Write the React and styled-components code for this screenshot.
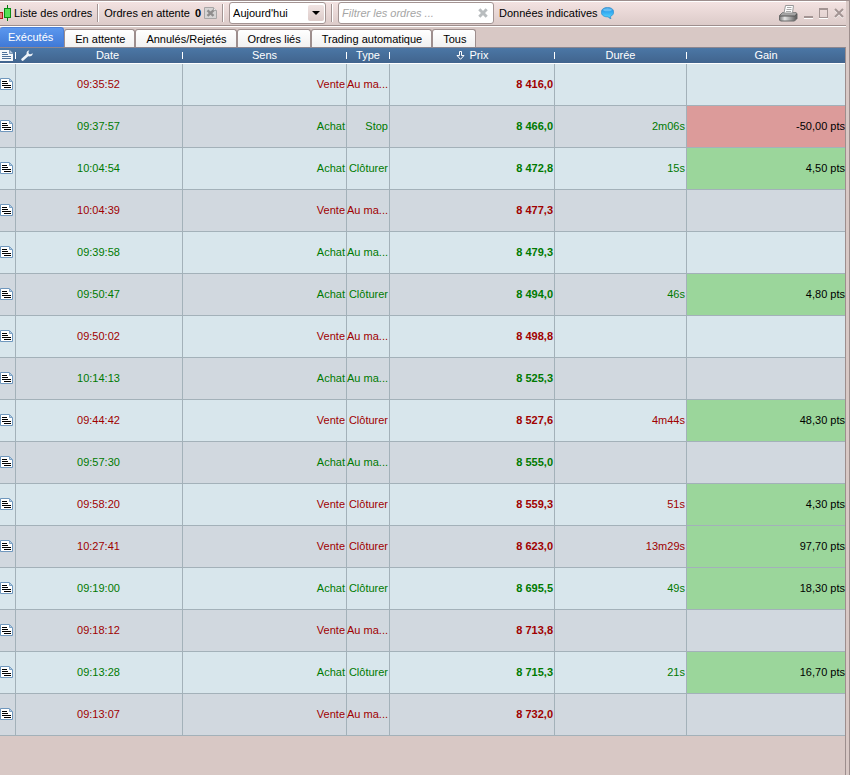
import React, { useState } from "react";
import styled, { createGlobalStyle } from "styled-components";

const TABS = [
  "Exécutés",
  "En attente",
  "Annulés/Rejetés",
  "Ordres liés",
  "Trading automatique",
  "Tous",
];

const ORDERS = [
  { date: "09:35:52", side: "Vente", type: "Au ma...", price: "8 416,0" },
  { date: "09:37:57", side: "Achat", type: "Stop", price: "8 466,0", time: "2m06s", gain: "-50,00 pts" },
  { date: "10:04:54", side: "Achat", type: "Clôturer", price: "8 472,8", time: "15s", gain: "4,50 pts" },
  { date: "10:04:39", side: "Vente", type: "Au ma...", price: "8 477,3" },
  { date: "09:39:58", side: "Achat", type: "Au ma...", price: "8 479,3" },
  { date: "09:50:47", side: "Achat", type: "Clôturer", price: "8 494,0", time: "46s", gain: "4,80 pts" },
  { date: "09:50:02", side: "Vente", type: "Au ma...", price: "8 498,8" },
  { date: "10:14:13", side: "Achat", type: "Au ma...", price: "8 525,3" },
  { date: "09:44:42", side: "Vente", type: "Clôturer", price: "8 527,6", time: "4m44s", gain: "48,30 pts" },
  { date: "09:57:30", side: "Achat", type: "Au ma...", price: "8 555,0" },
  { date: "09:58:20", side: "Vente", type: "Clôturer", price: "8 559,3", time: "51s", gain: "4,30 pts" },
  { date: "10:27:41", side: "Vente", type: "Clôturer", price: "8 623,0", time: "13m29s", gain: "97,70 pts" },
  { date: "09:19:00", side: "Achat", type: "Clôturer", price: "8 695,5", time: "49s", gain: "18,30 pts" },
  { date: "09:18:12", side: "Vente", type: "Au ma...", price: "8 713,8" },
  { date: "09:13:28", side: "Achat", type: "Clôturer", price: "8 715,3", time: "21s", gain: "16,70 pts" },
  { date: "09:13:07", side: "Vente", type: "Au ma...", price: "8 732,0" },
];

const CandleIcon = () => (
  <svg width="12" height="16" viewBox="0 0 12 16" shapeRendering="crispEdges">
    <path d="M0 7.5h2.5v6H0" fill="#e88080" stroke="#b02020" />
    <path d="M7.5 0v16" stroke="#0a7a10" />
    <rect x="4.500" y="3.500" width="6" height="9" fill="#55e055" stroke="#0b8a14" />
  </svg>
);

const CancelAllIcon = () => (
  <svg width="13" height="12" viewBox="0 0 13 12">
    <path d="M.5.5h9l3 3v8H.5z" fill="#d6d4d4" stroke="#a8a6a6" />
    <path d="M9.500.5v3h3" fill="#eee" stroke="#a8a6a6" />
    <path d="M3.500 3.300l6 5.500M9.500 3.300l-6 5.500" stroke="#8f8d8d" strokeWidth="2.400" />
  </svg>
);

const CrossIcon = () => (
  <svg width="10" height="10" viewBox="0 0 10 10">
    <path d="M1.300 1.300l7.400 7.400M8.700 1.300L1.300 8.700" stroke="#b9bdbf" strokeWidth="3" />
  </svg>
);

const BubbleIcon = () => (
  <svg width="13" height="12" viewBox="0 0 13 12">
    <defs>
      <linearGradient id="bubble" x1="0" y1="0" x2="0" y2="1">
        <stop offset="0" stopColor="#2d97dc" />
        <stop offset="0.350" stopColor="#2fa4ee" />
        <stop offset="0.800" stopColor="#4fcbfb" />
        <stop offset="1" stopColor="#1b86cc" />
      </linearGradient>
    </defs>
    <path
      d="M6.500.4C10 .4 12.700 2.200 12.700 4.900c0 2-1.200 3.700-3.200 4.500 0 .9.100 1.600.5 2.300-1.300-.3-2.300-.9-2.900-1.800C3.200 10.100.3 8.200.3 5.200.3 2.400 3 .4 6.500.4z"
      fill="url(#bubble)"
      stroke="#2386c8"
      strokeWidth="0.600"
    />
    <ellipse cx="6.500" cy="2.800" rx="4.300" ry="1.500" fill="#8fd2f8" opacity="0.600" />
  </svg>
);

const PrinterIcon = () => (
  <svg width="19" height="17" viewBox="0 0 19 17">
    <defs>
      <linearGradient id="printer" x1="0" y1="0" x2="1" y2="0">
        <stop offset="0" stopColor="#777" />
        <stop offset="0.300" stopColor="#e6e6e6" />
        <stop offset="1" stopColor="#555" />
      </linearGradient>
    </defs>
    <path d="M3.500 7.500h13l1.500 1v5l-2.500 2.500H1.500L.5 15v-4.500z" fill="url(#printer)" stroke="#6a6a6a" />
    <path d="M3.500 7.500h12.500l2 1.500-2.500 2H1z" fill="#a5a5a5" />
    <path d="M1 11h14.500l2.500-2" fill="none" stroke="#555" />
    <path d="M6.500.5h8l-1 7.500H5z" fill="#fff" stroke="#999" />
    <path d="M8 2.500h4.500M7.500 4.500h5M7 6.500h5" stroke="#aaa" />
  </svg>
);

const MinimizeIcon = () => (
  <svg width="9" height="11" viewBox="0 0 9 11" shapeRendering="crispEdges">
    <path d="M0 9h9" stroke="#a39493" strokeWidth="2" />
    <path d="M0 10.500h9" stroke="#fff" />
  </svg>
);

const MaximizeIcon = () => (
  <svg width="9" height="11" viewBox="0 0 9 11" shapeRendering="crispEdges">
    <path d="M.5 1v9M8.500 1v9M0 9.500h9" stroke="#a39493" fill="none" />
    <path d="M0 1h9" stroke="#a39493" strokeWidth="2" />
    <path d="M0 10.500h9" stroke="#fff" />
  </svg>
);

const CloseIcon = () => (
  <svg width="10" height="11" viewBox="0 0 10 11">
    <path d="M1 2l8 8M9 2l-8 8" stroke="#fff" strokeWidth="1.500" />
    <path d="M1 1l8 8M9 1L1 9" stroke="#a39493" strokeWidth="2" />
  </svg>
);

const HeaderNoteIcon = () => (
  <svg width="13" height="11" viewBox="0 0 13 11">
    <path d="M0 0h9.500L13 3.500V11H0z" fill="#f4f7fa" />
    <path d="M9.500 0v3.500H13" fill="#a9c0d8" stroke="#7b98b8" />
    <path
      d="M2 2.500h5M2 4.500h6M2 6.500h9M2 8.500h9"
      stroke="#4d719b"
      shapeRendering="crispEdges"
    />
  </svg>
);

const WrenchIcon = () => (
  <svg width="12" height="11" viewBox="0 0 12 11">
    <path d="M1.600 9.500l5-4.500" stroke="#eef3f8" strokeWidth="2.600" strokeLinecap="round" />
    <path
      d="M8.300.2C6.400.6 5.200 2.200 5.600 4c.4 1.700 1.900 2.700 3.600 2.300 1.500-.3 2.600-1.500 2.600-3.100l-2.200 1.100-1.600-.4-.6-1.600z"
      fill="#eef3f8"
    />
  </svg>
);

const SortIcon = () => (
  <svg width="9" height="9" viewBox="0 0 9 9">
    <path d="M3.500.5h2v4H8L4.500 8.300 1 4.500h2.500z" fill="#41658f" stroke="#fff" />
  </svg>
);

const NoteIcon = () => (
  <svg width="13" height="12" viewBox="0 0 13 12">
    <path d="M.5.5h8.500l3.500 3.500v7.500H.5z" fill="#fff" stroke="#6f97bd" />
    <path d="M9.500.5v3h3z" fill="#b9cfe2" stroke="#7fa4c6" />
    <path
      d="M2 3.500h5M2 5.500h6M2 7.500h9M4 9.500h7"
      stroke="#000"
      shapeRendering="crispEdges"
    />
  </svg>
);

const CaretIcon = () => (
  <svg width="8" height="4" viewBox="0 0 8 4">
    <path d="M0 0h8L4 4z" fill="#000" />
  </svg>
);

const App = () => {
  const [activeTab, setActiveTab] = useState(TABS[0]);
  const [period, setPeriod] = useState("today");
  const [filter, setFilter] = useState("");

  const renderRows = () =>
    ORDERS.map((order) => (
      <Row key={order.date} $side={order.side}>
        <IconCell>
          <IconButton aria-label="Note">
            <NoteIcon />
          </IconButton>
        </IconCell>
        <Cell $align="center">{order.date}</Cell>
        <Cell>{order.side}</Cell>
        <Cell>{order.type}</Cell>
        <Cell $bold>{order.price}</Cell>
        <Cell>{order.time}</Cell>
        <GainCell $gain={order.gain}>{order.gain}</GainCell>
      </Row>
    ));

  return (
    <Window>
      <GlobalStyle />
      <Toolbar>
        <CandleIcon />
        <Title>Liste des ordres</Title>
        <Separator />
        <Pending>
          Ordres en attente <strong>0</strong>
        </Pending>
        <IconButton aria-label="Annuler les ordres">
          <CancelAllIcon />
        </IconButton>
        <Separator />
        <SelectBox>
          <Select
            aria-label="Période"
            value={period}
            onChange={(e) => setPeriod(e.target.value)}
          >
            <option value="today">Aujourd'hui</option>
          </Select>
          <SelectArrow>
            <CaretIcon />
          </SelectArrow>
        </SelectBox>
        <Separator />
        <SearchBox>
          <SearchInput
            aria-label="Filtrer les ordres"
            placeholder="Filtrer les ordres ..."
            value={filter}
            onChange={(e) => setFilter(e.target.value)}
          />
          <IconButton aria-label="Effacer" onClick={() => setFilter("")}>
            <CrossIcon />
          </IconButton>
        </SearchBox>
        <Info>
          Données indicatives
          <BubbleIcon />
        </Info>
        <WindowButtons>
          <IconButton aria-label="Imprimer">
            <PrinterIcon />
          </IconButton>
          <IconButton aria-label="Réduire">
            <MinimizeIcon />
          </IconButton>
          <IconButton aria-label="Agrandir">
            <MaximizeIcon />
          </IconButton>
          <IconButton aria-label="Fermer">
            <CloseIcon />
          </IconButton>
        </WindowButtons>
      </Toolbar>

      <TabBar>
        {TABS.map((tab) => (
          <Tab
            key={tab}
            $active={tab === activeTab}
            onClick={() => setActiveTab(tab)}
          >
            {tab}
          </Tab>
        ))}
      </TabBar>

      <Panel>
        <Table>
          <colgroup>
            <Col $width={16} />
            <Col $width={167} />
            <Col $width={164} />
            <Col $width={43} />
            <Col $width={165} />
            <Col $width={132} />
            <Col />
          </colgroup>
          <thead>
            <tr>
              <HeadCell aria-label="Note">
                <HeadInner>
                  <HeaderNoteIcon />
                  <HeadLabel />
                </HeadInner>
              </HeadCell>
              <HeadCell>
                <HeadInner>
                  <WrenchBox>
                    <WrenchIcon />
                  </WrenchBox>
                  <HeadLabel>Date</HeadLabel>
                </HeadInner>
              </HeadCell>
              <HeadCell>
                <HeadInner>
                  <HeadLabel>Sens</HeadLabel>
                </HeadInner>
              </HeadCell>
              <HeadCell>
                <HeadInner>
                  <HeadLabel>Type</HeadLabel>
                </HeadInner>
              </HeadCell>
              <HeadCell>
                <HeadInner>
                  <HeadLabel>
                    <SortIcon />
                    Prix
                  </HeadLabel>
                </HeadInner>
              </HeadCell>
              <HeadCell>
                <HeadInner>
                  <HeadLabel>Durée</HeadLabel>
                </HeadInner>
              </HeadCell>
              <HeadCell>
                <HeadInner $last>
                  <HeadLabel>Gain</HeadLabel>
                </HeadInner>
              </HeadCell>
            </tr>
          </thead>
          <tbody>{renderRows()}</tbody>
        </Table>
      </Panel>
    </Window>
  );
};

export default App;

const GlobalStyle = createGlobalStyle`
  * {
    box-sizing: border-box;
  }

  body {
    margin: 0;
    background-color: #d8c8c5;
    font-family: "Liberation Sans", Arial, sans-serif;
    font-size: 11px;
    line-height: 12px;
    color: #000;
  }

  button,
  input,
  select {
    font: inherit;
    color: inherit;
  }

  svg {
    display: block;
    flex-shrink: 0;
  }
`;

const Window = styled.div`
  display: flex;
  flex-direction: column;
  min-height: 100vh;
  padding-right: 3px;
  border-top: 1px solid #9d8e8d;
  border-right: 1px solid #9d8e8d;
  background-color: #d8c8c5;
`;

const Toolbar = styled.div`
  display: flex;
  align-items: center;
  height: 25px;
  padding-bottom: 1px;
  border-top: 1px solid #fff;
  border-bottom: 1px solid #9d8e8d;
  box-shadow: 0 1px 0 #fff;
  background: linear-gradient(#f3e2e1, #dccbc9);
  white-space: nowrap;
`;

const Title = styled.span`
  margin-left: 2px;
`;

const Separator = styled.div`
  width: 2px;
  height: 18px;
  margin: 0 5px;
  border-left: 1px solid #a39493;
  border-right: 1px solid #fff;
`;

const Pending = styled.span`
  margin-right: 3px;

  strong {
    margin-left: 2px;
  }
`;

const IconButton = styled.button`
  display: flex;
  padding: 0;
  border: 0;
  background: none;
`;

const SelectBox = styled.div`
  position: relative;
  width: 97px;
  height: 22px;
`;

const Select = styled.select`
  width: 100%;
  height: 100%;
  padding: 0 20px 0 3px;
  border: 1px solid #a39493;
  border-radius: 3px;
  background-color: #fff;
  appearance: none;
`;

const SelectArrow = styled.span`
  position: absolute;
  top: 3px;
  right: 2px;
  display: flex;
  align-items: center;
  justify-content: center;
  width: 16px;
  height: 16px;
  border-radius: 2px;
  background: linear-gradient(#f1e4e3, #dccbc9);
  pointer-events: none;
`;

const SearchBox = styled.div`
  display: flex;
  align-items: center;
  width: 156px;
  height: 22px;
  padding: 0 5px 0 2px;
  border: 1px solid #a39493;
  border-radius: 3px;
  background-color: #fff;
`;

const SearchInput = styled.input`
  flex: 1;
  min-width: 0;
  padding: 0 1px;
  border: 0;
  outline: 0;
  background: none;

  &::placeholder {
    color: #a5a5a5;
    font-style: italic;
  }
`;

const Info = styled.span`
  display: flex;
  align-items: center;
  gap: 3px;
  margin-left: 5px;
`;

const WindowButtons = styled.div`
  display: flex;
  align-items: center;
  gap: 6px;
  margin-left: auto;
  padding-right: 2px;
`;

const TabBar = styled.div`
  display: flex;
  align-items: flex-end;
  height: 21px;
`;

const Tab = styled.button`
  height: ${(props) => (props.$active ? "20px" : "18px")};
  padding: ${(props) => (props.$active ? "0 10px 1px 8px" : "0 9px 0 10px")};
  border: 1px solid ${(props) => (props.$active ? "#4a7fd8" : "#9d8e8d")};
  border-left-width: ${(props) => (props.$active ? "0" : "1px")};
  border-bottom: 0;
  border-radius: 3px 3px 0 0;
  background: ${(props) =>
    props.$active
      ? "linear-gradient(#5b97ee, #4079d6)"
      : "linear-gradient(#fff, #f1f1f1)"};
  color: ${(props) => (props.$active ? "#fff" : "#000")};
  white-space: nowrap;
`;

const Panel = styled.div`
  flex: 1;
  border-top: 1px solid #8c8790;
  border-right: 1px solid #9d8e8d;
`;

const Table = styled.table`
  width: 100%;
  table-layout: fixed;
  border-collapse: separate;
  border-spacing: 0;
`;

const Col = styled.col`
  width: ${(props) => (props.$width ? `${props.$width}px` : "auto")};
`;

const HeadCell = styled.th`
  height: 16px;
  padding: 0;
  border-bottom: 1px solid #fff;
  background: linear-gradient(#4b77a5, #41648e);
  color: #fff;
  font-weight: normal;
`;

const HeadInner = styled.div`
  display: flex;
  align-items: center;
  height: 15px;

  &::after {
    content: "";
    display: ${(props) => (props.$last ? "none" : "block")};
    width: 1px;
    height: 7px;
    background-color: #fff;
  }
`;

const HeadLabel = styled.span`
  display: flex;
  flex: 1;
  align-items: center;
  justify-content: center;
  gap: 5px;
  padding-bottom: 1px;
`;

const WrenchBox = styled.span`
  padding-left: 5px;
`;

const Cell = styled.td`
  height: 42px;
  padding: 0 1px 1px 0;
  border-right: 1px solid #a3b1b9;
  border-bottom: 1px solid #a3b1b9;
  font-weight: ${(props) => (props.$bold ? "bold" : "normal")};
  text-align: ${(props) => props.$align || "right"};
  white-space: nowrap;
`;

const IconCell = styled(Cell)`
  padding-right: 0;
`;

const gainColor = (gain) => {
  if (!gain) return "transparent";
  return gain.startsWith("-") ? "#dc9b9a" : "#9bd69b";
};

const GainCell = styled(Cell)`
  padding-right: 0;
  border-right: 0;
  background-color: ${(props) => gainColor(props.$gain)};
  color: #000;
`;

const Row = styled.tr`
  background-color: #d8e6ec;
  color: ${(props) => (props.$side === "Vente" ? "#a00000" : "#007a00")};

  &:nth-child(even) {
    background-color: #d1d8df;
  }
`;
